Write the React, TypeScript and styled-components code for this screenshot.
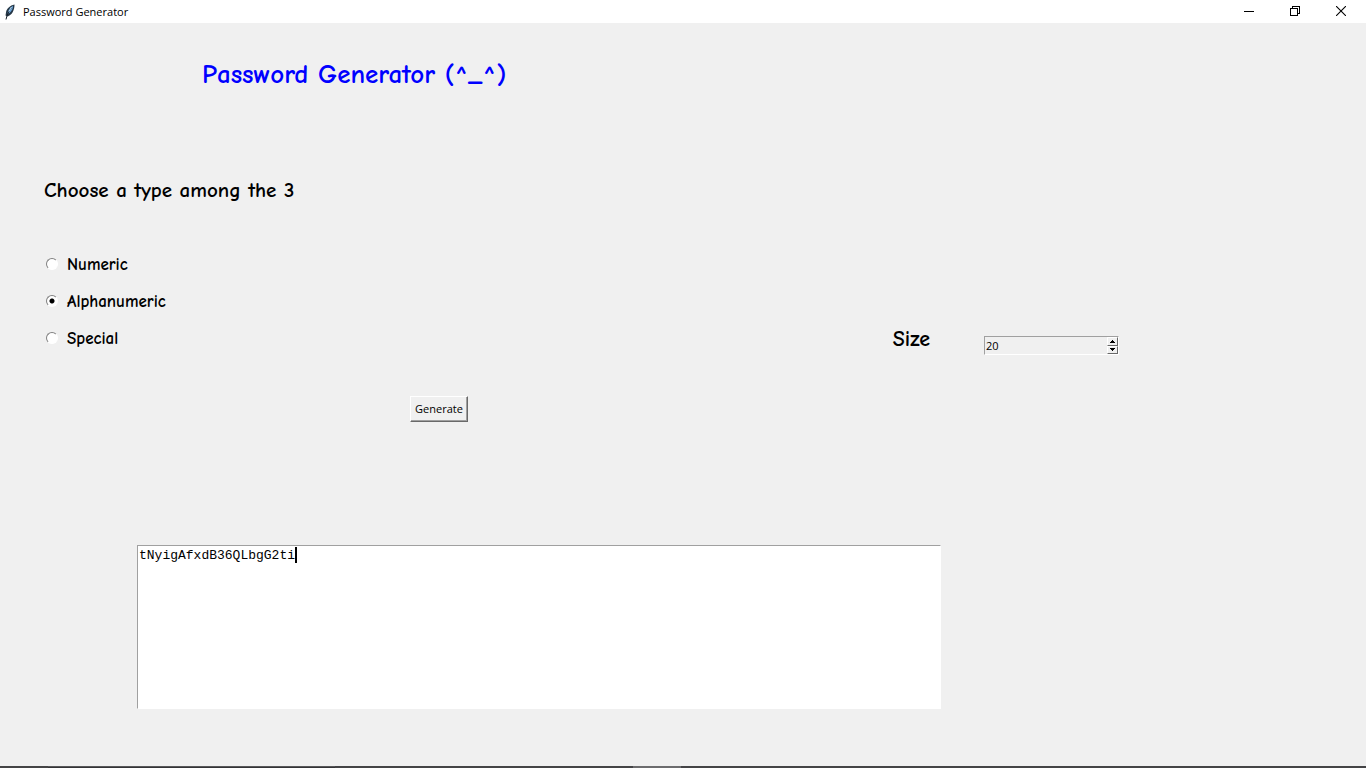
import React, { useState } from "react";
import styled, { createGlobalStyle } from "styled-components";

const comic = `"Comic Sans MS", "Comic Neue", Lato, sans-serif`;
const ui = `"Segoe UI", "Open Sans", sans-serif`;

const GlobalStyle = createGlobalStyle`
  * { box-sizing: border-box; }
  body { margin: 0; background: #f0f0f0; color: #000; font: 11px/16px ${ui}; }
`;

const Window = styled.div`
  min-height: 100vh;
  display: flex;
  flex-direction: column;
`;

const TitleBar = styled.header`
  height: 23px;
  display: flex;
  align-items: center;
  justify-content: space-between;
  background: #fff;
`;

const WindowName = styled.div`
  display: flex;
  align-items: center;
  gap: 7px;
  padding-left: 4px;
`;

const WindowControls = styled.div`
  display: flex;
  padding-right: 2px;
`;

const WindowButton = styled.button`
  width: 46px;
  height: 23px;
  padding: 0 0 2px;
  border: 0;
  background: transparent;
  display: grid;
  place-items: center;
`;

const Content = styled.main`
  flex: 1;
  padding: 36px 44px 55px;
`;

const Heading = styled.h1`
  margin: 0 0 85px;
  padding-left: 158px;
  font: 700 27px/32px ${comic};
  color: #0000ff;
`;

const Prompt = styled.h2`
  margin: 0;
  font: 700 21px/28px ${comic};
`;

const Options = styled.div`
  display: flex;
  justify-content: space-between;
  align-items: flex-end;
  margin-top: 49px;
  padding-right: 203px;
`;

const RadioGroup = styled.div`
  display: flex;
  flex-direction: column;
  gap: 13px;
`;

const RadioLabel = styled.label`
  display: flex;
  align-items: center;
  gap: 9px;
  padding-left: 2px;
  font: 700 17px/24px ${comic};
`;

const Radio = styled.input`
  appearance: none;
  width: 12px;
  height: 12px;
  margin: 0 0 2px;
  border: 1px solid;
  border-color: #808080 #fff #fff #808080;
  border-radius: 50%;
  background: #fff;
  &:checked {
    background: radial-gradient(circle, #000 2px, #fff 3px);
  }
`;

const SizeField = styled.div`
  display: flex;
  align-items: flex-end;
  gap: 54px;
  margin-bottom: -4px;
`;

const SizeLabel = styled.label`
  padding-bottom: 2px;
  font: 700 22px/28px ${comic};
`;

const SpinBox = styled.div`
  display: flex;
  width: 135px;
  height: 19px;
  border: 1px solid;
  border-color: #a0a0a0 #fff #fff #a0a0a0;
`;

const SpinInput = styled.input`
  flex: 1;
  min-width: 0;
  padding: 0 1px;
  border: 0;
  outline: 0;
  background: transparent;
  font: 11px/16px ${ui};
`;

const SpinButtons = styled.div`
  display: grid;
  grid-template-rows: 1fr 1fr;
  width: 11px;
`;

const SpinButton = styled.button`
  display: grid;
  place-items: center;
  min-height: 0;
  padding: 0;
  border: 1px solid;
  border-color: #fff #696969 #696969 #fff;
  background: #f0f0f0;
`;

const GenerateButton = styled.button`
  display: block;
  width: 58px;
  height: 26px;
  margin: 45px 0 123px 366px;
  padding: 0;
  border: 1px solid;
  border-color: #fff #696969 #696969 #fff;
  box-shadow: inset -1px -1px #a0a0a0;
  background: #f0f0f0;
  color: #000;
  font: 11px/16px ${ui};
`;

const Output = styled.div`
  position: relative;
  max-width: 804px;
  margin-left: 93px;
  font: 13px/16px "Courier New", "Liberation Mono", monospace;
`;

const OutputText = styled.textarea`
  display: block;
  width: 100%;
  height: 164px;
  padding: 2px 1px;
  border: 1px solid;
  border-color: #a0a0a0 #fff #fff #a0a0a0;
  outline: 0;
  resize: none;
  background: #fff;
  color: #000;
  caret-color: transparent;
  font: inherit;
`;

const Caret = styled.span`
  position: absolute;
  top: 2px;
  width: 2px;
  height: 16px;
  background: #000;
`;

const TaskbarEdge = styled.footer`
  display: flex;
  height: 2px;
  background: #444446;
`;

const TaskbarPart = styled.div<{ $width: number; $tone: string; $line?: string }>`
  width: ${(p) => p.$width}px;
  background: ${(p) => p.$tone};
  border-top: 1px solid ${(p) => p.$line ?? p.$tone};
`;

const types = ["Numeric", "Alphanumeric", "Special"];
const pools: Record<string, string> = {
  Numeric: "0123456789",
  Alphanumeric: "ABCDEFGHIJKLMNOPQRSTUVWXYZabcdefghijklmnopqrstuvwxyz0123456789",
  Special: "ABCDEFGHIJKLMNOPQRSTUVWXYZabcdefghijklmnopqrstuvwxyz0123456789!@#$%^&*()",
};

function Feather() {
  return (
    <svg width="12" height="16" viewBox="0 0 12 16" aria-hidden="true">
      <path d="M10.500.5C6 1.500 2.500 4.500 2 8.500L1.500 11.500 3.500 12.500C8 11 10.500 6.500 10.500.5Z" fill="#263746" />
      <path d="M9 1.800C6 3.500 4 6 3.500 9.800L5.500 9C8 7 9 4.500 9 1.800Z" fill="#69a5dc" />
      <path d="M7.500 3.500C5 7 3 10.500 2 15.500" fill="none" stroke="#17202a" />
      <path d="M7.500 3 5 7.500" stroke="#b9dcf5" />
    </svg>
  );
}

export default function App() {
  const [type, setType] = useState("Alphanumeric");
  const [size, setSize] = useState(20);
  const [password, setPassword] = useState("tNyigAfxdB36QLbgG2ti");

  const generate = () => {
    const pool = pools[type];
    setPassword(
      Array.from({ length: size }, () => pool[Math.floor(Math.random() * pool.length)]).join("")
    );
  };

  return (
    <Window>
      <GlobalStyle />
      <TitleBar>
        <WindowName><Feather />Password Generator</WindowName>
        <WindowControls>
          <WindowButton aria-label="Minimize">
            <svg width="10" height="10" shapeRendering="crispEdges"><path d="M0 5.500H10" stroke="#000" /></svg>
          </WindowButton>
          <WindowButton aria-label="Restore">
            <svg width="10" height="10" fill="none" stroke="#000" shapeRendering="crispEdges">
              <path d="M.5 2.500H7.500V9.500H.5ZM2.500 2.500V.5H9.500V7.500H7.500" />
            </svg>
          </WindowButton>
          <WindowButton aria-label="Close">
            <svg width="10" height="10"><path d="M0 0 10 10M10 0 0 10" stroke="#000" strokeWidth="1.100" /></svg>
          </WindowButton>
        </WindowControls>
      </TitleBar>
      <Content>
        <Heading>Password Generator (^_^)</Heading>
        <Prompt id="type-prompt">Choose a type among the 3</Prompt>
        <Options>
          <RadioGroup role="radiogroup" aria-labelledby="type-prompt">
            {types.map((t) => (
              <RadioLabel key={t}>
                <Radio type="radio" name="type" checked={type === t} onChange={() => setType(t)} />
                {t}
              </RadioLabel>
            ))}
          </RadioGroup>
          <SizeField>
            <SizeLabel htmlFor="size">Size</SizeLabel>
            <SpinBox>
              <SpinInput id="size" value={size} onChange={(e) => setSize(Number(e.target.value) || 0)} />
              <SpinButtons>
                <SpinButton aria-label="Increase size" onClick={() => setSize(size + 1)}>
                  <svg width="5" height="3" shapeRendering="crispEdges"><path d="M2 0H3V1H4V2H5V3H0V2H1V1H2Z" /></svg>
                </SpinButton>
                <SpinButton aria-label="Decrease size" onClick={() => setSize(Math.max(1, size - 1))}>
                  <svg width="5" height="3" shapeRendering="crispEdges"><path d="M0 0H5V1H4V2H3V3H2V2H1V1H0Z" /></svg>
                </SpinButton>
              </SpinButtons>
            </SpinBox>
          </SizeField>
        </Options>
        <GenerateButton onClick={generate}>Generate</GenerateButton>
        <Output>
          <OutputText
            aria-label="Generated password"
            spellCheck={false}
            value={password}
            onChange={(e) => setPassword(e.target.value)}
          />
          <Caret style={{ left: `calc(2px + ${password.length}ch)` }} />
        </Output>
      </Content>
      <TaskbarEdge>
        <TaskbarPart $width={48} $tone="#444446" />
        <TaskbarPart $width={287} $tone="#343436" $line="#58585a" />
        <TaskbarPart $width={298} $tone="#444446" />
        <TaskbarPart $width={48} $tone="#6c6c6e" />
      </TaskbarEdge>
    </Window>
  );
}
